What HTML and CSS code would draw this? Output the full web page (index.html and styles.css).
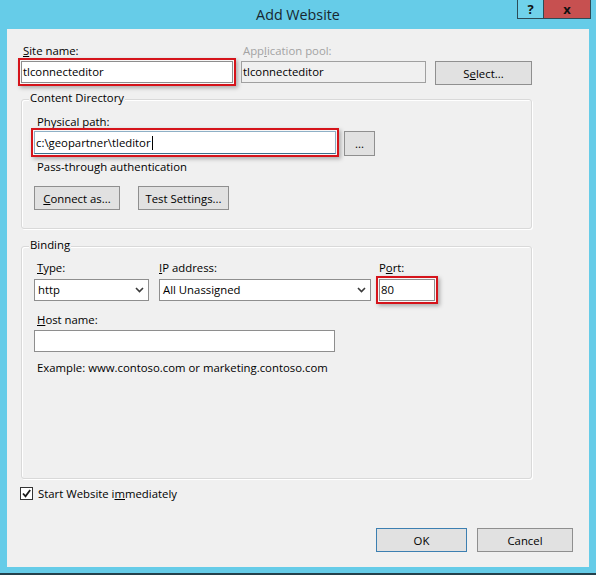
FILE: index.html
```html
<!DOCTYPE html>
<html>
<head>
	<title>Add Website</title>
	<link rel="stylesheet" href="styles.css">
</head>
<body>
	<div class="window">
		<div class="titlebar">
			<div class="title">Add Website</div>
			<div class="caption">
				<span class="help">?</span>
				<span class="close">x</span>
			</div>
		</div>

		<div class="client">
			<div class="site-row">
				<div class="field site-field">
					<div class="label"><u>S</u>ite name:</div>
					<div class="box marked">tlconnecteditor</div>
				</div>
				<div class="field pool-field">
					<div class="label disabled">App<u>l</u>ication pool:</div>
					<div class="box readonly">tlconnecteditor</div>
				</div>
				<button class="btn select-btn">S<u>e</u>lect...</button>
			</div>

			<div class="group content-group">
				<div class="group-title">Content Directory</div>
				<div class="group-body content-body">
					<div class="label">Physical path:</div>
					<div class="path-row">
						<div class="box path-box marked focused">c:\geopartner\tleditor<span class="caret"></span></div>
						<button class="btn browse-btn">...</button>
					</div>
					<div class="label pass-label">Pass-through authentication</div>
					<div class="button-row">
						<button class="btn connect-btn"><u>C</u>onnect as...</button>
						<button class="btn test-btn">Test Settings...</button>
					</div>
				</div>
			</div>

			<div class="group binding-group">
				<div class="group-title">Binding</div>
				<div class="group-body binding-body">
					<div class="binding-row">
						<div class="field type-field">
							<div class="label"><u>T</u>ype:</div>
							<div class="box combo">
								<span>http</span>
								<svg width="9" height="6" viewBox="0 0 9 6"><path d="M1 1l3.5 3.5L8 1" fill="none" stroke="#3a3a3a" stroke-width="1.6"/></svg>
							</div>
						</div>
						<div class="field ip-field">
							<div class="label tight"><u>I</u>P address:</div>
							<div class="box combo">
								<span>All Unassigned</span>
								<svg width="9" height="6" viewBox="0 0 9 6"><path d="M1 1l3.5 3.5L8 1" fill="none" stroke="#3a3a3a" stroke-width="1.6"/></svg>
							</div>
						</div>
						<div class="field port-field">
							<div class="label tight">P<u>o</u>rt:</div>
							<div class="box marked">80</div>
						</div>
					</div>
					<div class="label host-label"><u>H</u>ost name:</div>
					<div class="box host-box"></div>
					<div class="label example">Example: www.contoso.com or marketing.contoso.com</div>
				</div>
			</div>

			<div class="check-row">
				<span class="checkbox">
					<svg width="11" height="11" viewBox="0 0 11 11"><path d="M2 5.5l2.5 2.8L9.2 2" fill="none" stroke="#1a1a1a" stroke-width="1.8"/></svg>
				</span>
				<span>Start Website i<u>m</u>mediately</span>
			</div>

			<div class="dialog-buttons">
				<button class="btn ok-btn">OK</button>
				<button class="btn cancel-btn">Cancel</button>
			</div>
		</div>
	</div>
</body>
</html>
```

FILE: styles.css
```css
body {
	margin: 0;
	background-color: #66cce8;
	font-family: "Open Sans", "Noto Sans", sans-serif;
	font-size: 11.35px;
	color: #000;
}

.window {
	width: 596px;
	height: 575px;
	box-sizing: border-box;
	border-bottom: 2px solid #24414c;
}

/* title bar */
.titlebar {
	height: 29px;
	display: grid;
	grid-template-columns: 1fr auto 1fr;
	align-items: start;
}

.title {
	grid-column: 2;
	font-size: 14.3px;
	line-height: 29px;
	color: #17272f;
}

.caption {
	grid-column: 3;
	justify-self: end;
	display: flex;
	margin-right: 5px;
}

.help,
.close {
	box-sizing: border-box;
	height: 19px;
	border: 1px solid #2c4c57;
	border-top: 0;
	font-weight: bold;
	font-size: 13px;
	line-height: 18px;
	text-align: center;
	color: #111;
}

.help {
	width: 27px;
	background-color: #70d2eb;
}

.close {
	width: 47px;
	border-left: 0;
	background-color: #c75050;
}

/* client area */
.client {
	height: 538px;
	margin: 0 7px;
	box-sizing: border-box;
	padding: 14px 16px 0 14px;
	background-color: #f0f0f0;
}

.label {
	line-height: 15px;
	padding-left: 2px;
	white-space: nowrap;
}

.label.tight {
	padding-left: 0;
}

.disabled {
	color: #a3a3a3;
}

.box {
	box-sizing: border-box;
	height: 22px;
	border: 1px solid #8e8e8e;
	background-color: #fff;
	padding-left: 1px;
	line-height: 20px;
	white-space: nowrap;
}

.box.readonly {
	background-color: #f0f0f0;
	border-color: #a0a0a0;
}

.box.focused {
	border-color: #8fb0c6;
	border-bottom-color: #3b6f8c;
}

.marked {
	box-shadow: 0 0 0 1px #f7f7f7, 0 0 0 3px #d5141b, 2px 2px 4px 3px rgba(0, 0, 0, 0.28);
}

.caret {
	display: inline-block;
	width: 1px;
	height: 14px;
	margin-left: 1px;
	vertical-align: -3px;
	background-color: #000;
}

.btn {
	box-sizing: border-box;
	height: 24px;
	padding: 0;
	border: 1px solid #8f8f8f;
	background-color: #e1e1e1;
	font: inherit;
	color: #000;
}

/* site name / application pool */
.site-row {
	display: flex;
	align-items: flex-start;
}

.label + .box {
	margin-top: 3px;
}

.site-field {
	width: 212px;
}

.pool-field {
	width: 185px;
	margin-left: 8px;
}

.select-btn {
	width: 97px;
	margin-left: 9px;
	margin-top: 18px;
}

/* group boxes */
.group {
	box-sizing: border-box;
	width: 511px;
	border: 1px solid #d9d9d9;
	border-radius: 3px;
	box-shadow: inset 1px 1px 0 #fff, 1px 1px 0 #fff;
}

.group-title {
	width: fit-content;
	margin: -10px 0 0 7px;
	padding: 0 1px;
	line-height: 15px;
	background-color: #f0f0f0;
}

.group-body {
	padding: 9px 0 18px 12px;
}

.group-body .label {
	padding-left: 3px;
}

.group-body .label.tight {
	padding-left: 0;
}

.content-group {
	margin-top: 14px;
}

.path-row {
	display: flex;
	align-items: flex-start;
	margin-top: 2px;
}

.path-box {
	width: 302px;
	height: 23px;
	line-height: 21px;
}

.browse-btn {
	width: 31px;
	height: 25px;
	margin-left: 8px;
	line-height: 14px;
}

.pass-label {
	margin-top: 3px;
}

.button-row {
	display: flex;
	gap: 18px;
	margin-top: 12px;
}

.connect-btn {
	width: 86px;
}

.test-btn {
	width: 91px;
}

.binding-group {
	height: 233px;
	margin-top: 17px;
}

.binding-body {
	padding-top: 8px;
}

.binding-row {
	display: flex;
}

.binding-row .label + .box {
	margin-top: 4px;
}

.type-field {
	width: 115px;
}

.ip-field {
	width: 212px;
	margin-left: 10px;
}

.port-field {
	width: 56px;
	margin-left: 8px;
}

.combo {
	display: flex;
	align-items: center;
	justify-content: space-between;
	padding: 0 4px 0 3px;
}

.host-label {
	margin-top: 11px;
}

.host-box {
	width: 301px;
}

.example {
	margin-top: 8px;
}

/* footer */
.check-row {
	display: flex;
	align-items: center;
	height: 15px;
	margin-top: 7px;
}

.checkbox {
	display: flex;
	align-items: center;
	justify-content: center;
	box-sizing: border-box;
	width: 13px;
	height: 13px;
	margin-left: -1px;
	margin-right: 5px;
	border: 1px solid #333;
	background-color: #fff;
}

.dialog-buttons {
	display: flex;
	justify-content: flex-end;
	gap: 10px;
	margin-top: 27px;
}

.ok-btn {
	width: 91px;
	border-color: #3c7fb1;
}

.cancel-btn {
	width: 96px;
}
```
